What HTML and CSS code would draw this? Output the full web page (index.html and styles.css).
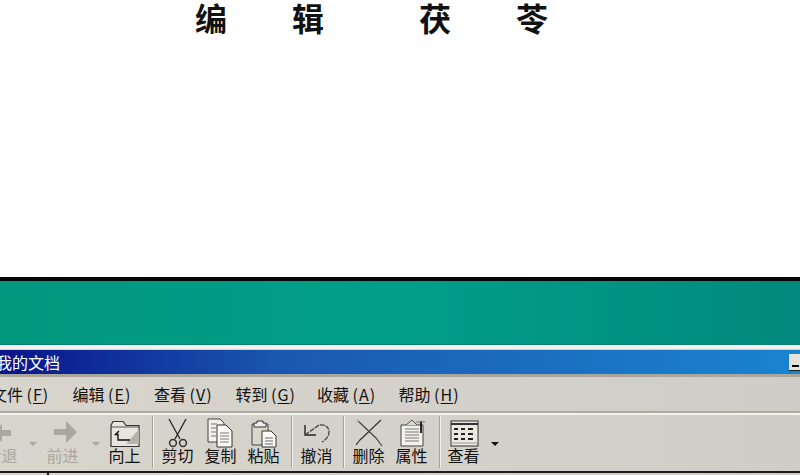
FILE: index.html
```html
<!DOCTYPE html>
<html lang="zh-CN">
<head>
<meta charset="utf-8">
<title>编辑 茯苓</title>
<link rel="stylesheet" href="styles.css">
</head>
<body>
<section class="doc">
  <h1 class="heading"><span class="word"><span>编</span><span>辑</span></span><span class="word"><span>茯</span><span>苓</span></span></h1>
</section>
<section class="desktop"></section>
<section class="window">
  <div class="titlebar">
    <span class="title">我的文档</span>
    <span class="min"><i></i></span>
  </div>
  <nav class="menu">
    <span class="menu-item first">文件 <b>(<u>F</u>)</b></span>
    <span class="menu-item">编辑 <b>(<u>E</u>)</b></span>
    <span class="menu-item">查看 <b>(<u>V</u>)</b></span>
    <span class="menu-item">转到 <b>(<u>G</u>)</b></span>
    <span class="menu-item">收藏 <b>(<u>A</u>)</b></span>
    <span class="menu-item">帮助 <b>(<u>H</u>)</b></span>
  </nav>
  <div class="toolbar">
    <div class="tool disabled first">
      <svg class="ico" viewBox="0 0 33 30"><path d="M26 12h-9V6L6 15l11 9v-6h9z" fill="#a8a89c"/></svg>
      <span>后退</span>
    </div>
    <span class="caret disabled c1"></span>
    <div class="tool disabled">
      <svg class="ico" viewBox="0 0 33 30"><path d="M8 11h12V3l11 11-11 11v-8H8z" fill="#a8a89c"/></svg>
      <span>前进</span>
    </div>
    <span class="caret disabled c2"></span>
    <div class="tool">
      <svg class="ico" viewBox="0 0 33 30"><path d="M3 7.500 5 3.500h10l3 4h13v21H3z" fill="#e8e6de" stroke="#333" stroke-width="1.200"/><path d="M3 9h28" stroke="#555"/><path d="M18 26 31 11v15z" fill="#b5b3a9"/><path d="M11 13l-3.500 3.500h2.500v5.500h12" fill="none" stroke="#111" stroke-width="1.400"/></svg>
      <span>向上</span>
    </div>
    <span class="sep s-a"></span>
    <div class="tool">
      <svg class="ico" viewBox="0 0 33 30"><path d="M8 1 19 21M25 1 14 21" fill="none" stroke="#222" stroke-width="1.300"/><circle cx="12" cy="25" r="3.400" fill="none" stroke="#333" stroke-width="1.500"/><circle cx="22" cy="25" r="3.400" fill="none" stroke="#333" stroke-width="1.500"/></svg>
      <span>剪切</span>
    </div>
    <div class="tool">
      <svg class="ico" viewBox="0 0 33 30"><path d="M4 1h12l4 4v19H4z" fill="#f2f0ea" stroke="#444"/><path d="M13 7h9l6 6v16H13z" fill="#fbfaf6" stroke="#333"/><path d="M7 6h6M7 10h5M7 14h5M7 18h5M16 15h9M16 18h9M16 21h9M16 24h9" stroke="#777"/></svg>
      <span>复制</span>
    </div>
    <div class="tool">
      <svg class="ico" viewBox="0 0 33 30"><path d="M5 6h16v21H5z" fill="#d9d6cc" stroke="#444"/><path d="M10 3h6v2h3v4H7V5h3z" fill="#efede6" stroke="#333"/><path d="M15 13h9l5 5v11H15z" fill="#fbfaf6" stroke="#333"/><path d="M18 20h8M18 23h8M18 26h8" stroke="#666"/></svg>
      <span>粘贴</span>
    </div>
    <span class="sep s-b"></span>
    <div class="tool">
      <svg class="ico" viewBox="0 0 33 30"><path d="M5 7v10h11" fill="none" stroke="#222" stroke-width="1.400"/><path d="M5 17 19 7c6-1 10 2 10 7 0 4-3 8-7 10" fill="none" stroke="#444" stroke-width="1.300" stroke-dasharray="5 1"/></svg>
      <span>撤消</span>
    </div>
    <span class="sep s-d"></span>
    <div class="tool">
      <svg class="ico" viewBox="0 0 33 30"><path d="M29 2 8 22 4 27" fill="none" stroke="#333" stroke-width="1.200"/><path d="M5 2 24 20 30 28" fill="none" stroke="#444" stroke-width="1.200"/><path d="M4 4 7 2" stroke="#bbb" stroke-width="2"/></svg>
      <span>删除</span>
    </div>
    <div class="tool">
      <svg class="ico" viewBox="0 0 33 30"><path d="M6 7h22v21H6z" fill="#f4f2ec" stroke="#444"/><path d="M10 11h14M10 14h14M10 17h14M10 20h14M10 23h14" stroke="#777"/><path d="M11 7l6-5 5 5" fill="#d8d5cb" stroke="#555"/><path d="M26 3v12" stroke="#111" stroke-width="1.800"/><path d="M21 4h9" stroke="#777"/></svg>
      <span>属性</span>
    </div>
    <span class="sep s-c"></span>
    <div class="tool">
      <svg class="ico" viewBox="0 0 33 30"><rect x="4" y="3" width="27" height="25" fill="#ece9e1" stroke="#333"/><path d="M4 6h27" stroke="#333" stroke-width="2"/><path d="M7 11h4M14 11h4M21 11h5M7 16h4M14 16h4M21 16h5M7 21h4M14 21h4M21 21h5" stroke="#222" stroke-width="2"/><path d="M4 25h27" stroke="#999"/></svg>
      <span>查看</span>
    </div>
    <span class="caret dark"></span>
  </div>
  <div class="address"><span class="addr-field"></span></div>
</section>
</body>
</html>
```

FILE: styles.css
```css
html, body {
  margin: 0;
  padding: 0;
  width: 800px;
  height: 475px;
  overflow: hidden;
  background: #fff;
  font-family: "Noto Sans CJK SC", "Liberation Sans", sans-serif;
}

.doc {
  height: 277px;
  box-sizing: border-box;
  padding-left: 195px;
}

.heading {
  margin: 0;
  display: flex;
  gap: 95px;
  font-size: 32px;
  font-weight: 700;
  line-height: 34px;
  color: #111;
}

.word {
  display: flex;
  gap: 65px;
}

.desktop {
  height: 63px;
  border-top: 4px solid #060606;
  border-bottom: 1px solid #0b7f72;
  background: linear-gradient(90deg, #02977f 0%, #009f8a 50%, #00897c 100%);
}

.window {
  height: 130px;
  background: linear-gradient(90deg, #d8d5cc, #cfcdc7);
  border-top: 4px solid #f2f1ec;
}

.titlebar {
  height: 24px;
  margin-top: 1px;
  display: flex;
  align-items: center;
  justify-content: space-between;
  background: linear-gradient(90deg, #08158a 0%, #1a58b0 35%, #1a84d0 100%);
  border-bottom: 3px solid #a9a69c;
}

.title {
  margin-left: -4px;
  font-size: 16px;
  line-height: 24px;
  color: #fff;
}

.min {
  width: 16px;
  height: 17px;
  margin-right: -5px;
  box-sizing: border-box;
  background: #e4e2da;
  border-right: 1px solid #222;
  border-bottom: 1px solid #222;
  display: flex;
  align-items: flex-end;
  padding: 0 0 3px 3px;
}

.min i {
  width: 7px;
  height: 2px;
  background: #000;
}

.menu {
  height: 34px;
  display: flex;
  align-items: center;
  font-size: 16px;
  color: #111;
  border-bottom: 2px solid #aeaba1;
  box-shadow: 0 2px 0 #f4f3ee;
}

.menu-item {
  width: 81.5px;
  flex: none;
  white-space: nowrap;
  line-height: 30px;
}

.menu-item.first {
  margin-left: -9px;
}

.menu-item b {
  font-weight: 400;
  letter-spacing: 1px;
}

.menu-item u {
  text-underline-offset: 2px;
}

.toolbar {
  height: 55px;
  margin-top: 3px;
  display: flex;
  align-items: flex-end;
  padding-bottom: 3px;
  box-sizing: border-box;
}

.tool {
  width: 33px;
  flex: none;
  margin-right: 10px;
  display: flex;
  flex-direction: column;
  align-items: center;
  font-size: 16px;
  line-height: 20px;
  color: #111;
}

.tool span {
  white-space: nowrap;
  margin-bottom: 3px;
}

.tool.first {
  margin-left: -15px;
  margin-right: 0;
}

.ico {
  width: 33px;
  height: 30px;
  margin-bottom: -3px;
  display: block;
}

.tool.disabled {
  color: #a9a89e;
  margin-right: 0;
}

.caret {
  flex: none;
  width: 0;
  height: 0;
  border-left: 4px solid transparent;
  border-right: 4px solid transparent;
  border-top: 4px solid #a9a89e;
  align-self: center;
  margin-top: 3px;
}

.caret.c1 {
  margin-left: 11px;
  margin-right: 9px;
}

.caret.c2 {
  margin-left: 13px;
  margin-right: 8px;
}

.caret.dark {
  border-top-color: #111;
  margin-left: 1px;
}

.sep {
  flex: none;
  align-self: stretch;
  width: 2px;
  margin-right: 7px;
  background: linear-gradient(90deg, #a5a298 50%, #f1f0ea 50%);
}

.s-a,
.s-b {
  margin-left: 1px;
}

.s-d {
  margin-left: 0;
}

.s-c {
  margin-left: 1px;
  margin-right: 6px;
}

.address {
  height: 6px;
  border-top: 2px solid #1c1c1c;
  padding-left: 47px;
}

.addr-field {
  display: block;
  height: 6px;
  border-left: 2px solid #1c1c1c;
}
```
